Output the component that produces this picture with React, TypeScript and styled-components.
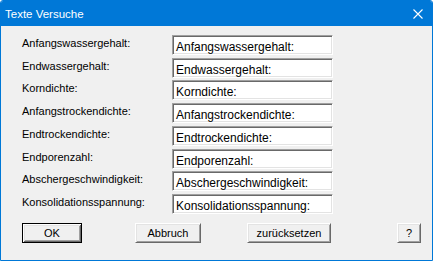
import React from "react";
import styled, { createGlobalStyle } from "styled-components";

const Global = createGlobalStyle`
  html, body { margin: 0; padding: 0; background: #ffffff; }
  body { width: 433px; height: 261px; overflow: hidden; }
`;

const Window = styled.div`
  box-sizing: border-box;
  width: 433px;
  height: 261px;
  border: 1px solid #0078d7;
  border-radius: 3px 3px 0 0;
  background: #f0f0f0;
  display: flex;
  flex-direction: column;
  overflow: hidden;
`;

const TitleBar = styled.div`
  height: 25px;
  flex: none;
  background: #0078d7;
  display: flex;
  align-items: center;
  justify-content: space-between;
  padding: 0 9px 0 4px;
  color: #ffffff;
  font-family: "Liberation Sans", Arial, sans-serif;
  font-size: 11.5px;
`;

const Title = styled.span`
  line-height: 14px;
`;

const CloseIcon = styled.svg`
  display: block;
  width: 10px;
  height: 10px;
  margin-top: 1px;
`;

const Body = styled.div`
  flex: 1;
  padding: 9px 0 0 21px;
  display: flex;
  flex-direction: column;
`;

const FieldGrid = styled.div`
  display: grid;
  grid-template-columns: 150px 161px;
  grid-auto-rows: 20px;
  row-gap: 2.71px;
`;

const Label = styled.div`
  font-family: "Liberation Sans", Arial, sans-serif;
  font-size: 11px;
  line-height: 13px;
  color: #000000;
  padding-top: 2px;
  white-space: nowrap;
`;

const TextBox = styled.div`
  box-sizing: border-box;
  height: 20px;
  background: #ffffff;
  border-top: 1px solid #a0a0a0;
  border-left: 1px solid #a0a0a0;
  border-right: 1px solid #ffffff;
  border-bottom: 1px solid #ffffff;
  box-shadow: inset 1px 1px 0 #696969, inset -1px -1px 0 #e3e3e3;
  padding: 4px 0 0 3px;
  font-family: "Liberation Sans", Arial, sans-serif;
  font-size: 12px;
  line-height: 14px;
  color: #000000;
  white-space: nowrap;
  overflow: hidden;
`;

const ButtonRow = styled.div`
  display: flex;
  margin-top: 9px;
`;

const Button = styled.button<{ $w: number; $ml: number; $default?: boolean }>`
  box-sizing: border-box;
  width: ${(p) => p.$w}px;
  height: 20px;
  margin-left: ${(p) => p.$ml}px;
  padding: 0;
  background: #f0f0f0;
  font-family: "Liberation Sans", Arial, sans-serif;
  font-size: 11px;
  color: #000000;
  border-top: 1px solid ${(p) => (p.$default ? "#000000" : "#ffffff")};
  border-left: 1px solid ${(p) => (p.$default ? "#000000" : "#ffffff")};
  border-right: 1px solid ${(p) => (p.$default ? "#000000" : "#696969")};
  border-bottom: 1px solid ${(p) => (p.$default ? "#000000" : "#696969")};
  box-shadow: ${(p) =>
    p.$default
      ? "inset 1px 1px 0 #ffffff, inset -1px -1px 0 #696969, inset 2px 2px 0 #e3e3e3, inset -2px -2px 0 #a0a0a0"
      : "inset 1px 1px 0 #e3e3e3, inset -1px -1px 0 #a0a0a0"};
  display: flex;
  align-items: center;
  justify-content: center;
`;

const fields = [
  "Anfangswassergehalt:",
  "Endwassergehalt:",
  "Korndichte:",
  "Anfangstrockendichte:",
  "Endtrockendichte:",
  "Endporenzahl:",
  "Abschergeschwindigkeit:",
  "Konsolidationsspannung:",
];

export default function App() {
  return (
    <>
      <Global />
      <Window>
        <TitleBar>
          <Title>Texte Versuche</Title>
          <CloseIcon viewBox="0 0 10 10">
            <path d="M0.5 0.5 L9.5 9.5 M9.5 0.5 L0.5 9.5" stroke="#ffffff" strokeWidth="1.1" fill="none" />
          </CloseIcon>
        </TitleBar>
        <Body>
          <FieldGrid>
            {fields.map((f) => (
              <React.Fragment key={f}>
                <Label>{f}</Label>
                <TextBox>{f}</TextBox>
              </React.Fragment>
            ))}
          </FieldGrid>
          <ButtonRow>
            <Button $w={60} $ml={0} $default>OK</Button>
            <Button $w={66} $ml={53}>Abbruch</Button>
            <Button $w={84} $ml={46}>zurücksetzen</Button>
            <Button $w={24} $ml={66}>?</Button>
          </ButtonRow>
        </Body>
      </Window>
    </>
  );
}
